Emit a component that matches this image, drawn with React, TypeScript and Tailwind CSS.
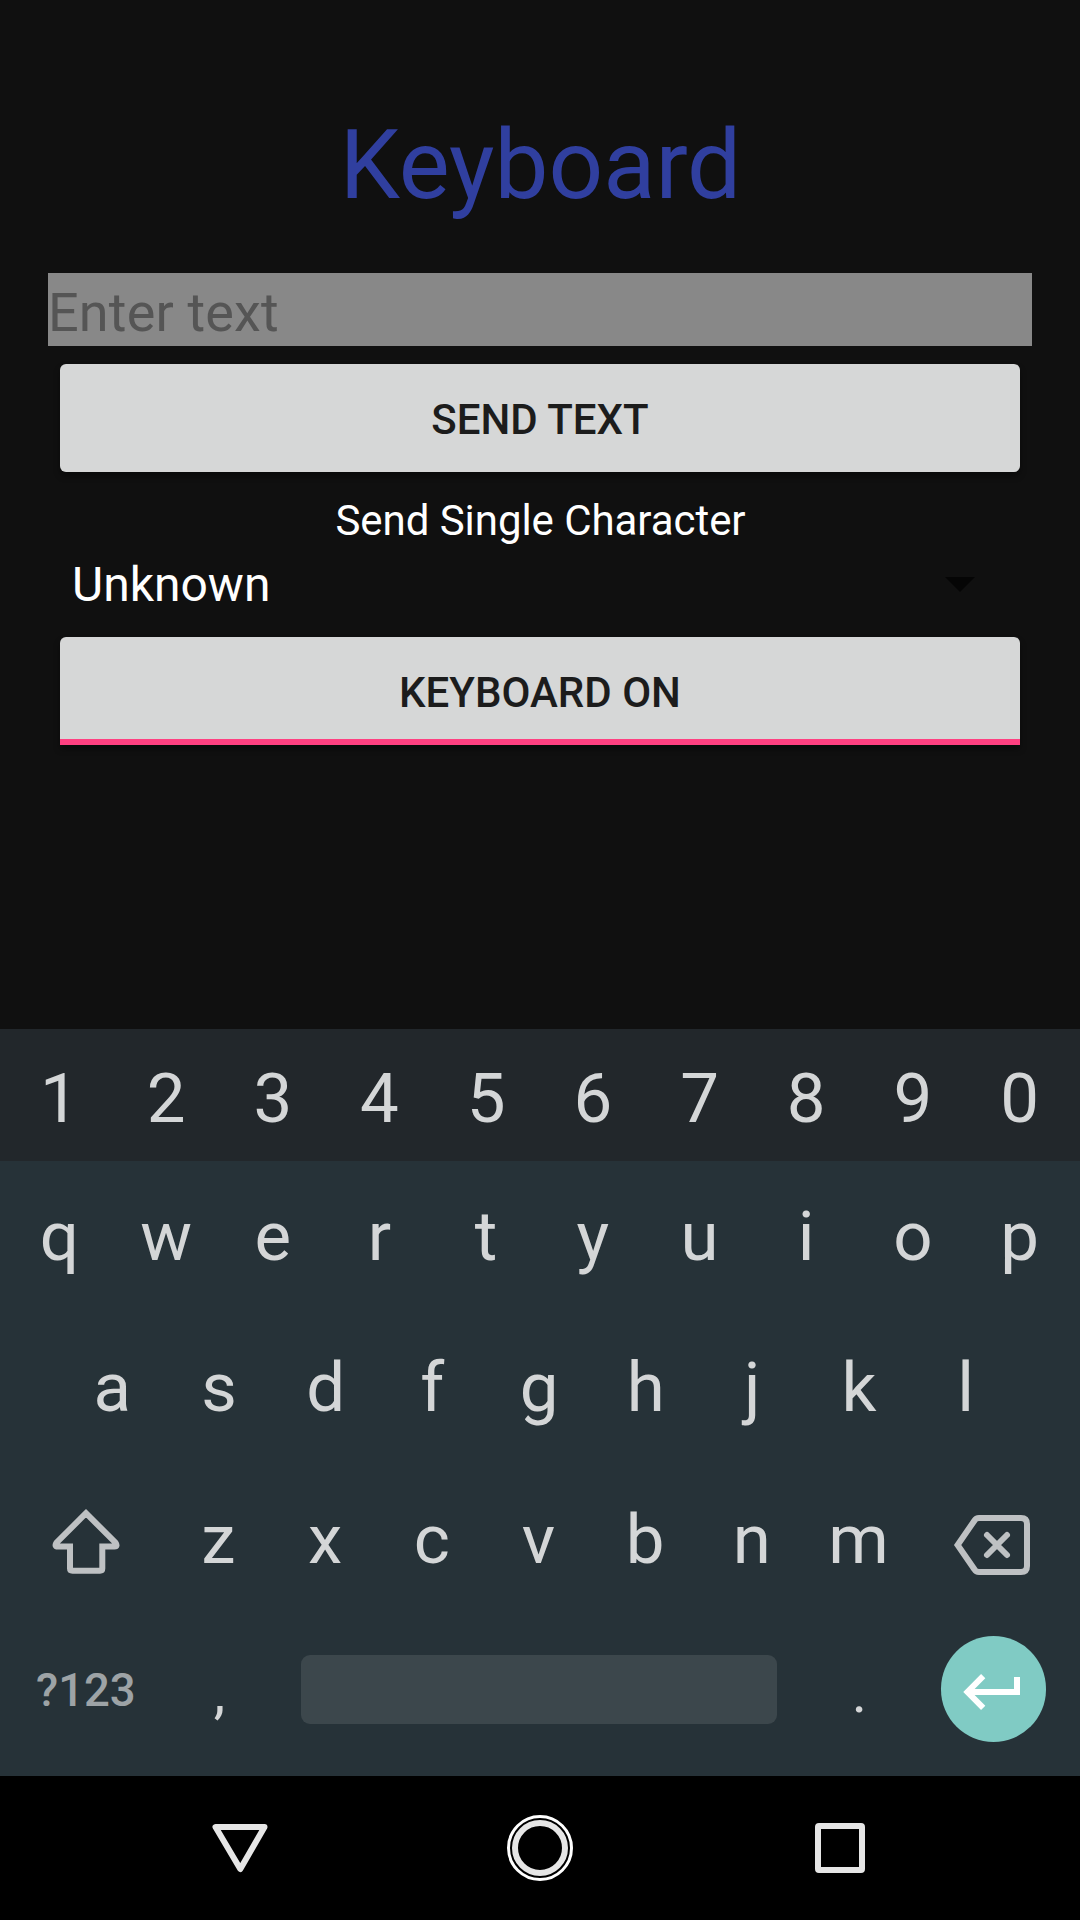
import React from "react";

const keyText = "flex items-center justify-center leading-none text-[#d4d6d7]";

function Row({ keys }: { keys: string[] }) {
  return (
    <>
      {keys.map((k) => (
        <div key={k} className={"h-full w-[106.7px] shrink-0 text-[69px] " + keyText}>
          {k}
        </div>
      ))}
    </>
  );
}

export default function App() {
  return (
    <div className="flex h-[1920px] w-[1080px] flex-col overflow-hidden bg-[#101010] font-['Roboto',sans-serif]">
      <div className="flex h-[1029px] flex-col px-12">
        <h1 className="mt-[100px] h-[130px] pl-[1px] text-center text-[96px] leading-[130px] text-[#303f9f]">Keyboard</h1>
        <div className="mt-[43px] h-[73px] bg-[#888888] text-[54px] leading-[79px] tracking-[0.15px] text-[#555555]">Enter text</div>
        <button className="mx-3 mt-[18px] h-[108px] rounded-[6px] bg-[#d6d7d7] pt-[2px] text-[42px] font-medium text-[#1c1c1c] shadow-[0_4px_6px_rgba(0,0,0,0.4)]">
          SEND TEXT
        </button>
        <div className="mt-[20px] h-[58px] pl-[1px] text-center text-[42px] leading-[58px] tracking-[-0.05px] text-white">
          Send Single Character
        </div>
        <div className="mx-6 mt-[2px] flex h-[85px] justify-between">
          <span className="h-[66px] text-[48px] leading-[66px] text-white">Unknown</span>
          <svg className="mr-[33px] mt-[25px] h-[15px] w-[30px]" viewBox="0 0 30 15">
            <path d="M0 0h30L15 15z" fill="#050505" />
          </svg>
        </div>
        <button className="mx-3 h-[108px] rounded-t-[6px] border-b-[6px] border-[#ff4081] bg-[#d6d7d7] pt-[9px] text-[42px] font-medium leading-none text-[#1c1c1c] shadow-[0_4px_6px_rgba(0,0,0,0.4)]">
          KEYBOARD ON
        </button>
      </div>

      <div className="flex h-[747px] flex-col bg-[#263238]">
        <div className="flex h-[132px] justify-center bg-[#22272b] pr-[1px] pt-[6px]">
          <Row keys={["1", "2", "3", "4", "5", "6", "7", "8", "9", "0"]} />
        </div>
        <div className="flex h-[151px] justify-center pr-[1px]">
          <Row keys={["q", "w", "e", "r", "t", "y", "u", "i", "o", "p"]} />
        </div>
        <div className="flex h-[151px] justify-center pr-[2px]">
          <Row keys={["a", "s", "d", "f", "g", "h", "j", "k", "l"]} />
        </div>
        <div className="flex h-[152px]">
          <div className="w-[165px] shrink-0 pl-[51px] pt-[44px]">
            <svg className="h-[70px] w-[70px]" viewBox="0 0 70 70" fill="none" stroke="#bec1c3" strokeWidth="6">
              <path
                d="M35 6.200L5.500 35.700Q3 39.500 7 39.500H19V61.500Q19 63.700 21.500 63.700H49Q51.300 63.700 51.300 61.500V39.500H63.500Q67 39.500 64.500 35.700Z"
              />
            </svg>
          </div>
          <Row keys={["z", "x", "c", "v", "b", "n", "m"]} />
          <div className="pl-[40px] pt-[50px]">
            <svg className="h-[64px] w-[80px]" viewBox="0 0 80 64" fill="none" stroke="#bec1c3" strokeWidth="6">
              <path d="M27 5H69Q75 5 75 11V53Q75 59 69 59H27Q24 59 22.500 56.500L5.600 32L22.500 7.500Q24 5 27 5Z" />
              <path d="M35 22L55 42M55 22L35 42" strokeLinecap="round" />
            </svg>
          </div>
        </div>
        <div className="flex h-[148px] items-center">
          <div className="ml-[36px] w-[98px] whitespace-nowrap pt-[5px] text-[45.5px] font-medium text-[#9da3a6]">?123</div>
          <div className={"ml-[32px] h-full w-[107px] pt-[6px] text-[58px] " + keyText}>,</div>
          <div className="ml-[28px] mt-[1px] h-[69px] w-[476px] rounded-[9px] bg-[#3c474c]" />
          <div className={"ml-[29px] h-full w-[107px] pt-[6px] text-[58px] " + keyText}>.</div>
          <div className="ml-[27.500px] flex h-[105.500px] w-[105.500px] items-center justify-center rounded-full bg-[#80cbc4]">
            <svg className="h-[44px] w-[60px]" viewBox="0 0 60 44" fill="none" stroke="#fff" strokeWidth="6">
              <path d="M54 10V25H6M20.200 9.200L4.500 25L20.200 40.800" />
            </svg>
          </div>
        </div>
      </div>

      <div className="flex h-[144px] items-center justify-between bg-black px-[207px]">
        <svg className="h-[70px] w-[66px]" viewBox="0 0 66 70" fill="none" stroke="#e6e6e6" strokeWidth="6" strokeLinejoin="round">
          <path d="M8.500 14H57.500L33.300 56Z" />
        </svg>
        <svg className="h-[70px] w-[70px]" viewBox="0 0 70 70" fill="none">
          <circle cx="35" cy="35" r="31.500" stroke="#fff" strokeWidth="3" />
          <circle cx="35" cy="35" r="25" stroke="#e6e6e6" strokeWidth="6" />
        </svg>
        <svg className="h-[70px] w-[66px]" viewBox="0 0 66 70" fill="none">
          <rect x="11" y="13" width="44" height="44" rx="1" stroke="#e6e6e6" strokeWidth="6" />
        </svg>
      </div>
    </div>
  );
}
